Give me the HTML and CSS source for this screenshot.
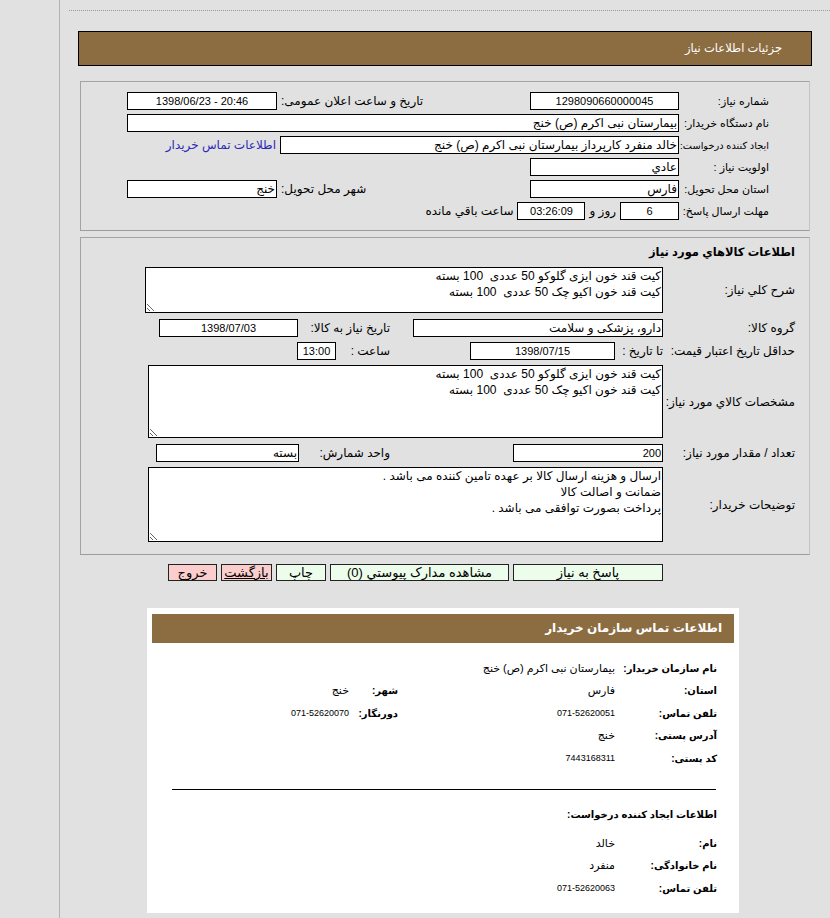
FILE: index.html
```html
<!DOCTYPE html>
<html lang="fa" dir="rtl">
<head>
<meta charset="utf-8">
<title>جزئیات اطلاعات نیاز</title>
<link rel="stylesheet" href="styles.css">
</head>
<body>
<div class="page">
  <div class="dots"></div>
  <div class="titlebar">جزئیات اطلاعات نیاز</div>

  <div class="box box1">
    <div class="row">
      <div class="lab">شماره نیاز:</div>
      <div class="in w149 c ltr num">1298090660000045</div>
      <div class="lab-l">تاریخ و ساعت اعلان عمومی:</div>
      <div class="in w150 c ltr num">1398/06/23 - 20:46</div>
    </div>
    <div class="row">
      <div class="lab">نام دستگاه خریدار:</div>
      <div class="in grow">بیمارستان نبی اکرم (ص) خنج</div>
    </div>
    <div class="row">
      <div class="lab tight">ایجاد کننده درخواست:</div>
      <div class="in w399">خالد منفرد کارپرداز بیمارستان نبی اکرم (ص) خنج</div>
      <a class="link" href="#">اطلاعات تماس خریدار</a>
    </div>
    <div class="row">
      <div class="lab">اولویت نیاز :</div>
      <div class="in w149">عادي</div>
    </div>
    <div class="row">
      <div class="lab">استان محل تحویل:</div>
      <div class="in w149">فارس</div>
      <div class="lab-l">شهر محل تحویل:</div>
      <div class="in w150">خنج</div>
    </div>
    <div class="row">
      <div class="lab">مهلت ارسال پاسخ:</div>
      <div class="in w59 c num">6</div>
      <span class="txt">روز و</span>
      <div class="in w68 c num">03:26:09</div>
      <span class="txt">ساعت باقي مانده</span>
    </div>
  </div>

  <div class="box box2">
    <div class="sec-title">اطلاعات كالاهاي مورد نياز</div>
    <div class="arow">
      <div class="lab2">شرح کلي نياز:</div>
      <textarea class="ta ta1" readonly>کیت قند خون ایزی گلوکو 50 عددی  100 بسته
کیت قند خون اکیو چک 50 عددی  100 بسته</textarea>
    </div>
    <div class="row r-first">
      <div class="lab2">گروه کالا:</div>
      <div class="in w250">دارو، پزشکی و سلامت</div>
      <div class="lab3 l3a">تاریخ نیاز به کالا:</div>
      <div class="in w139 c num">1398/07/03</div>
    </div>
    <div class="row r-second">
      <div class="lab2">حداقل تاریخ اعتبار قیمت:</div>
      <div class="sub">تا تاریخ :</div>
      <div class="in w145 c num">1398/07/15</div>
      <div class="lab3 l3b">ساعت :</div>
      <div class="in w39 c num">13:00</div>
    </div>
    <div class="arow a2">
      <div class="lab2">مشخصات کالاي مورد نياز:</div>
      <textarea class="ta ta2" readonly>کیت قند خون ایزی گلوکو 50 عددی  100 بسته
کیت قند خون اکیو چک 50 عددی  100 بسته</textarea>
    </div>
    <div class="row r-third">
      <div class="lab2">تعداد / مقدار مورد نیاز:</div>
      <div class="in w150 num">200</div>
      <div class="lab3 l3c">واحد شمارش:</div>
      <div class="in w143">بسته</div>
    </div>
    <div class="arow a3">
      <div class="lab2">توضيحات خريدار:</div>
      <textarea class="ta ta3" readonly>ارسال و هزینه ارسال کالا بر عهده تامین کننده می باشد .
ضمانت و اصالت کالا
پرداخت بصورت توافقی می باشد .</textarea>
    </div>
  </div>

  <div class="buttons">
    <div class="btn green b150">پاسخ به نیاز</div>
    <div class="btn green b179">مشاهده مدارک پیوستي (0)</div>
    <div class="btn green b50">چاپ</div>
    <div class="btn pink b51 u">بازگشت</div>
    <div class="btn pink b49">خروج</div>
  </div>

  <div class="panel">
    <div class="panel-head">اطلاعات تماس سازمان خریدار</div>
    <div class="info">
      <div class="k">نام سازمان خریدار:</div>
      <div class="v span3">بیمارستان نبی اکرم (ص) خنج</div>

      <div class="k">استان:</div>
      <div class="v">فارس</div>
      <div class="k">شهر:</div>
      <div class="v">خنج</div>

      <div class="k">تلفن تماس:</div>
      <div class="v n">071-52620051</div>
      <div class="k">دورنگار:</div>
      <div class="v n">071-52620070</div>

      <div class="k">آدرس پستی:</div>
      <div class="v span3">خنج</div>

      <div class="k">کد پستی:</div>
      <div class="v n span3">7443168311</div>
    </div>
    <hr class="sep">
    <div class="sub-title">اطلاعات ایجاد کننده درخواست:</div>
    <div class="info info2">
      <div class="k">نام:</div>
      <div class="v span3">خالد</div>
      <div class="k">نام خانوادگی:</div>
      <div class="v span3">منفرد</div>
      <div class="k">تلفن تماس:</div>
      <div class="v n span3">071-52620063</div>
    </div>
  </div>
</div>
</body>
</html>
```

FILE: styles.css
```css
* { box-sizing: border-box; }

html, body {
  margin: 0;
  height: 100%;
  overflow: hidden;
}

body {
  background: #e1e1e1;
  font-family: "Liberation Sans", "DejaVu Sans", sans-serif;
  font-size: 12px;
  color: #000;
}

.page {
  margin-left: 59px;
  border-left: 1px solid #b3b3b3;
  min-height: 918px;
  padding-top: 10px;
}

.dots {
  margin-left: 9px;
  height: 0;
  border-top: 1px dotted #9a9a9a;
}

.titlebar {
  margin: 20px 18px 0 18px;
  height: 35px;
  background: #8c6d42;
  border: 1px solid #000;
  color: #fff;
  font-size: 11.5px;
  line-height: 33px;
  padding-right: 29px;
}

.box {
  margin: 0 20px;
  border: 1px solid #a3a3a3;
  border-right-color: #c4c4c4;
  border-bottom-color: #9c9c9c;
}

.box1 {
  margin-top: 15px;
  padding: 8px 40px 8px 46px;
}

.box2 {
  margin-top: 6px;
  padding: 4px 14px 12px 0;
}

.row {
  display: flex;
  align-items: center;
  height: 22px;
  white-space: nowrap;
}

.lab {
  width: 90px;
  flex: none;
  font-size: 11px;
}

.lab.tight { font-size: 9.8px; }

.lab-l {
  flex: 1;
  text-align: left;
  padding-left: 4px;
}

.in {
  flex: none;
  height: 18px;
  border: 1px solid #000;
  background: #fff;
  line-height: 16px;
  padding: 0 1px;
  overflow: hidden;
  white-space: nowrap;
  font-size: 12px;
}

.in.num { font-size: 11px; }
.in.c { text-align: center; }
.ltr { direction: ltr; }
.grow { flex: 1; }

.w39 { width: 39px; }
.w59 { width: 59px; }
.w68 { width: 68px; }
.w139 { width: 139px; }
.w143 { width: 143px; }
.w145 { width: 145px; }
.w149 { width: 149px; }
.w150 { width: 150px; }
.w250 { width: 250px; }
.w399 { width: 399px; }

.link {
  color: #2a2ab8;
  text-decoration: none;
  padding-right: 4px;
}

.txt {
  margin: 0 4px;
}

.sec-title {
  font-weight: bold;
  font-size: 11.5px;
  line-height: 20px;
  height: 20px;
}

.lab2 {
  width: 132px;
  flex: none;
  padding-left: 4px;
  white-space: nowrap;
}

.arow {
  display: flex;
  align-items: center;
  margin-top: 5px;
}

.arow.a2, .arow.a3 { margin-top: 3px; }

.ta {
  display: block;
  flex: none;
  font: inherit;
  font-size: 12px;
  line-height: 16px;
  border: 1px solid #000;
  background: #fff;
  padding: 0 1px;
  margin: 0;
  resize: both;
  overflow: hidden;
  color: #000;
}

.ta1 { width: 518px; height: 46px; }
.ta2 { width: 515px; height: 73px; }
.ta3 { width: 515px; height: 75px; }

.r-first { margin-top: 4px; }
.r-second { margin-top: 1px; }
.r-third { margin-top: 4px; }

.sub {
  width: 48px;
  flex: none;
}

.lab3 {
  flex: none;
  white-space: nowrap;
}

.l3a { margin-right: 23px; width: 92px; }
.l3b { margin-right: 80px; width: 54px; }
.l3c { margin-right: 123px; width: 91px; }

.buttons {
  display: flex;
  gap: 4px;
  margin: 9px 167px 0 0;
}

.btn {
  flex: none;
  height: 17px;
  border: 1px solid #222;
  line-height: 15px;
  text-align: center;
  font-size: 13px;
  white-space: nowrap;
}

.green { background: #ecfdec; }
.pink { background: #fbcdcd; }
.u { text-decoration: underline; }

.b49 { width: 49px; }
.b50 { width: 50px; }
.b51 { width: 51px; }
.b150 { width: 150px; }
.b179 { width: 179px; }

.panel {
  margin: 27px 91px 0 87px;
  background: #fff;
  padding: 6px 5px 13.75px 5px;
}

.panel-head {
  height: 29px;
  background: #8c6d42;
  color: #fff;
  font-weight: bold;
  font-size: 12px;
  line-height: 29px;
  padding-right: 12px;
}

.info {
  display: grid;
  grid-template-columns: 102px 217px 49px 1fr;
  grid-auto-rows: 22.5px;
  align-items: center;
  margin-top: 13.75px;
  padding-right: 17px;
}

.info2 { margin-top: 5.5px; }

.k {
  font-weight: bold;
  font-size: 10px;
  white-space: nowrap;
}

.v {
  font-size: 11px;
  white-space: nowrap;
}

.v.n { font-size: 9px; }

.span3 { grid-column: span 3; }

.sep {
  margin: 19.75px 18px 0 20px;
  height: 0;
  border: 0;
  border-top: 1px solid #000;
}

.sub-title {
  margin-top: 14px;
  height: 22.5px;
  line-height: 22.5px;
  font-weight: bold;
  font-size: 10px;
  padding-right: 17px;
}
```
